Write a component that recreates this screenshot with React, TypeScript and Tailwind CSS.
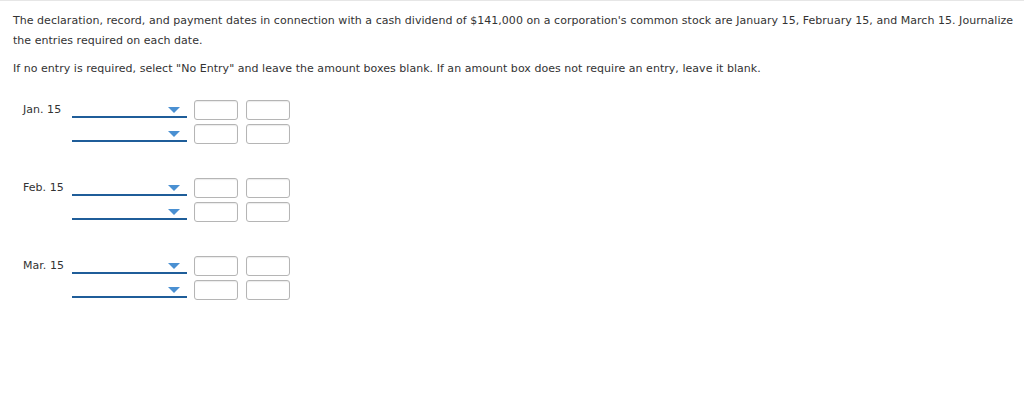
const entries = ["Jan. 15", "Feb. 15", "Mar. 15"];

function Arrow() {
  return (
    <svg width="12" height="6" viewBox="0 0 12 6" className="absolute right-[7px] top-[7px]">
      <polygon points="0,0 12,0 6,6" fill="#4a90d2" />
    </svg>
  );
}

function EntryRow() {
  return (
    <div className="flex items-start gap-[7px] h-[20px]">
      <div className="relative w-[115px] h-[18px] border-b-2 border-[#1f5d99]">
        <Arrow />
      </div>
      <div className="flex gap-[8px]">
        <div className="w-[44px] h-[20px] rounded-[3px] border border-[#b5b5b5] bg-white shadow-[inset_0_1px_1px_rgba(0,0,0,0.08)]" />
        <div className="w-[44px] h-[20px] rounded-[3px] border border-[#b5b5b5] bg-white shadow-[inset_0_1px_1px_rgba(0,0,0,0.08)]" />
      </div>
    </div>
  );
}

export default function App() {
  return (
    <div
      className="w-[1024px] h-[401px] bg-white border-t border-[#e6e6e6] text-[#333] text-[11px] tracking-[0.035px]"
      style={{ fontFamily: '"DejaVu Sans", Verdana, sans-serif' }}
    >
      <div className="pl-[13px] pr-[6px] pt-[10px]">
        <p className="leading-[20px]">
          The declaration, record, and payment dates in connection with a cash dividend of $141,000 on a corporation's common stock are January 15, February 15, and March 15. Journalize the entries required on each date.
        </p>
        <p className="leading-[20px] mt-[8px]">
          If no entry is required, select "No Entry" and leave the amount boxes blank. If an amount box does not require an entry, leave it blank.
        </p>
      </div>
      <div className="pt-[21px] flex flex-col gap-[34px]">
        {entries.map((d) => (
          <div key={d} className="flex">
            <div className="w-[72px] pl-[23px] leading-[20px]">{d}</div>
            <div className="flex flex-col gap-[4px]">
              <EntryRow />
              <EntryRow />
            </div>
          </div>
        ))}
      </div>
    </div>
  );
}
